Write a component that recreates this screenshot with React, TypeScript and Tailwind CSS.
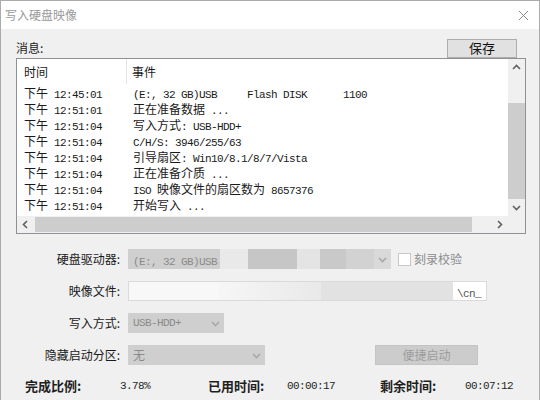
import React from 'react';

const CJK = /([\u2e80-\u9fff\u3000-\u303f\uff00-\uffef]+)/;

// SimSun-like mix: CJK at 12px, half-width ASCII at 6px per char
const Mixed = ({ text }: { text: string }) => {
  const parts = text.split(CJK).filter(Boolean);
  return (
    <>
      {parts.map((p, i) =>
        CJK.test(p) ? (
          <span key={i} className="text-[12px] font-['Noto_Sans_CJK_SC',sans-serif]">
            {p}
          </span>
        ) : (
          <span key={i} className="text-[11px] tracking-[-0.6px] font-['Liberation_Mono',monospace] whitespace-pre">
            {p}
          </span>
        )
      )}
    </>
  );
};

const Chevron = ({ dir, color = '#606060' }: { dir: 'up' | 'down' | 'left' | 'right'; color?: string }) => {
  const pts = {
    up: '1,6 4.5,2.5 8,6',
    down: '1,3 4.5,6.5 8,3',
    left: '6,1 2.5,4.5 6,8',
    right: '3,1 6.5,4.5 3,8',
  }[dir];
  return (
    <svg width="9" height="9" viewBox="0 0 9 9">
      <polyline points={pts} fill="none" stroke={color} strokeWidth="1.6" />
    </svg>
  );
};

const rows: [string, string][] = [
  ['12:45:01', '(E:, 32 GB)USB     Flash DISK      1100'],
  ['12:51:01', '正在准备数据 ...'],
  ['12:51:04', '写入方式: USB-HDD+'],
  ['12:51:04', 'C/H/S: 3946/255/63'],
  ['12:51:04', '引导扇区: Win10/8.1/8/7/Vista'],
  ['12:51:04', '正在准备介质 ...'],
  ['12:51:04', 'ISO 映像文件的扇区数为 8657376'],
  ['12:51:04', '开始写入 ...'],
];

const Label = ({ children }: { children: React.ReactNode }) => (
  <div className="w-[104px] text-right text-[12px] text-[#1a1a1a] font-['Noto_Sans_CJK_SC',sans-serif]">
    {children}
  </div>
);

export default function App() {
  return (
    <div className="w-[540px] h-[400px] bg-[#f0f0f0] border-x border-t border-[#ababab] flex flex-col overflow-hidden font-['Noto_Sans_CJK_SC',sans-serif]">
      {/* TITLE BAR */}
      <div className="h-[28px] bg-white flex items-center justify-between pl-[4px] pr-[10px] shrink-0">
        <span className="text-[12px] text-[#9a9a9a]">写入硬盘映像</span>
        <svg width="11" height="11" viewBox="0 0 11 11">
          <path d="M1 1L10 10M10 1L1 10" stroke="#8a8a8a" strokeWidth="1" />
        </svg>
      </div>

      <div className="pl-[15px] pr-[13px] flex flex-col">
        {/* MESSAGE HEADER */}
        <div className="mt-[9px] h-[20px] flex items-center justify-between">
          <span className="text-[12px] text-[#1a1a1a]">消息:</span>
          <button className="mr-[9px] w-[70px] h-[19px] bg-[#e1e1e1] border border-[#adadad] text-[13px] text-[#111] flex items-center justify-center">
            保存
          </button>
        </div>

        {/* LOG LIST */}
        <div className="h-[176px] border border-[#8e9196] bg-white flex flex-col">
          <div className="h-[157px] flex">
            <div className="flex-1 overflow-hidden text-[#1a1a1a]">
              <div className="h-[25px] flex items-center">
                <div className="w-[110px] h-full pl-[7px] flex items-center border-r border-[#e3e3e3] text-[12px]">时间</div>
                <div className="pl-[5px] text-[12px]">事件</div>
              </div>
              {rows.map(([t, e], i) => (
                <div key={i} className="h-[16px] flex items-center leading-none">
                  <div className="w-[110px] pl-[7px] whitespace-nowrap">
                    <Mixed text={`下午 ${t}`} />
                  </div>
                  <div className="pl-[6px] whitespace-nowrap">
                    <Mixed text={e} />
                  </div>
                </div>
              ))}
            </div>
            {/* VERTICAL SCROLLBAR */}
            <div className="w-[17px] bg-[#f0f0f0] flex flex-col">
              <div className="h-[17px] flex items-center justify-center"><Chevron dir="up" /></div>
              <div className="h-[27px]" />
              <div className="h-[96px] bg-[#cdcdcd]" />
              <div className="flex-1 flex items-center justify-center"><Chevron dir="down" /></div>
            </div>
          </div>
          {/* HORIZONTAL SCROLLBAR */}
          <div className="h-[17px] flex bg-[#f0f0f0]">
            <div className="w-[17px] flex items-center justify-center"><Chevron dir="left" /></div>
            <div className="w-[437px] my-[1px] ml-[1px] bg-[#cdcdcd]" />
            <div className="flex-1" />
            <div className="w-[17px] flex items-center justify-center"><Chevron dir="right" /></div>
            <div className="w-[17px] bg-[#f0f0f0]" />
          </div>
        </div>

        {/* FORM */}
        <div className="mt-[15px] flex flex-col gap-[12px]">
          <div className="h-[20px] flex items-center">
            <Label>硬盘驱动器:</Label>
            <div className="ml-[8px] w-[263px] h-[20px] bg-[#cfcfcf] flex items-center text-[#8a8a8a] leading-none">
              <div className="w-[92px] pl-[5px] whitespace-nowrap"><Mixed text="(E:, 32 GB)USB" /></div>
              <div className="w-[28px] h-full bg-[#e9e9e9]" />
              <div className="w-[49px] h-full bg-[#c6c6c6]" />
              <div className="w-[23px] h-full bg-[#e4e4e4]" />
              <div className="w-[26px] h-full bg-[#c9c9c9]" />
              <div className="flex-1 h-full bg-[#d2d2d2]" />
              <div className="w-[17px] h-full bg-[#d9d9d9] flex items-center justify-center"><Chevron dir="down" color="#a8a8a8" /></div>
            </div>
            <div className="ml-[7px] w-[13px] h-[13px] bg-white border border-[#c8c8c8]" />
            <span className="ml-[3px] text-[12px] text-[#8c8c8c]">刻录校验</span>
          </div>

          <div className="h-[20px] flex items-center">
            <Label>映像文件:</Label>
            <div className="ml-[8px] w-[359px] h-[20px] bg-white border border-[#dadada] flex items-center leading-none">
              <div className="w-[90px] h-full bg-[#f8f8f8]" />
              <div className="w-[102px] h-full bg-gradient-to-r from-[#f6f6f6] to-[#e9e9e9]" />
              <div className="w-[132px] h-full bg-[#e2e2e2]" />
              <div className="flex-1 pl-[4px] text-[#555] whitespace-nowrap"><Mixed text="\cn_" /></div>
            </div>
          </div>

          <div className="h-[20px] flex items-center">
            <Label>写入方式:</Label>
            <div className="ml-[8px] w-[96px] h-[20px] bg-[#cfcfcf] flex items-center justify-between pl-[5px] text-[#8a8a8a] leading-none">
              <Mixed text="USB-HDD+" />
              <div className="w-[17px] flex items-center justify-center"><Chevron dir="down" color="#a8a8a8" /></div>
            </div>
          </div>

          <div className="h-[20px] flex items-center">
            <Label>隐藏启动分区:</Label>
            <div className="ml-[8px] w-[137px] h-[20px] bg-[#cfcfcf] flex items-center justify-between pl-[5px] text-[#8a8a8a] leading-none">
              <Mixed text="无" />
              <div className="w-[17px] flex items-center justify-center"><Chevron dir="down" color="#a8a8a8" /></div>
            </div>
            <button className="ml-[110px] w-[103px] h-[20px] bg-[#cccccc] border border-[#c4c4c4] text-[12px] text-[#9c9c9c] flex items-center justify-center">
              便捷启动
            </button>
          </div>
        </div>

        {/* PROGRESS STATS */}
        <div className="mt-[11px] h-[20px] flex items-center pl-[9px] text-[#1f1f1f]">
          <span className="w-[95px] text-[13px] font-semibold">完成比例:</span>
          <span className="w-[88px] text-[11px] tracking-[-0.6px] font-['Liberation_Mono',monospace]">3.78%</span>
          <span className="w-[79px] text-[13px] font-semibold">已用时间:</span>
          <span className="w-[93px] text-[11px] tracking-[-0.6px] font-['Liberation_Mono',monospace]">00:00:17</span>
          <span className="w-[85px] text-[13px] font-semibold">剩余时间:</span>
          <span className="text-[11px] tracking-[-0.6px] font-['Liberation_Mono',monospace]">00:07:12</span>
        </div>
      </div>
    </div>
  );
}
